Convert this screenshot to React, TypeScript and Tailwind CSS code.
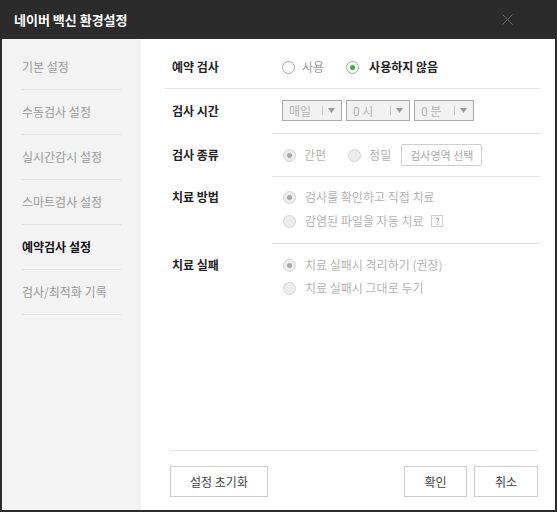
import React, { useState } from 'react';

const FONT = "font-['Noto_Sans_CJK_KR','Noto_Sans',sans-serif]";

const menu = ['기본 설정', '수동검사 설정', '실시간감시 설정', '스마트검사 설정', '예약검사 설정', '검사/최적화 기록'];

function Radio({ checked, disabled }: { checked: boolean; disabled?: boolean }) {
  if (disabled) {
    return (
      <span className="w-[13px] h-[13px] rounded-full border border-[#d4d4d4] bg-[#ececec] flex items-center justify-center shrink-0">
        {checked && <span className="w-[5px] h-[5px] rounded-full bg-[#a8a8a8]" />}
      </span>
    );
  }
  return (
    <span className="w-[13px] h-[13px] rounded-full border border-[#a9a9a9] bg-white flex items-center justify-center shrink-0">
      {checked && <span className="w-[5px] h-[5px] rounded-full bg-[#3aae3a]" />}
    </span>
  );
}

function Select({ label, width }: { label: string; width: string }) {
  return (
    <div className={`${width} h-[21px] border border-[#a8a8a8] bg-[#f2f2f2] flex items-center pl-[6px] pr-[6px] text-[12px] text-[#b4b4b4]`}>
      <span className="flex-1">{label}</span>
      <span className="w-px h-[9px] bg-[#c8c8c8] mr-[5px]" />
      <svg width="7" height="5" viewBox="0 0 7 5">
        <path d="M0 0h7L3.5 5z" fill="#9a9a9a" />
      </svg>
    </div>
  );
}

export default function App() {
  const [active] = useState(4);

  return (
    <div className={`w-[557px] h-[512px] flex flex-col bg-[#2b2b2b] ${FONT}`}>
      {/* title bar */}
      <div className="h-[39px] flex items-center justify-between pl-[14px] pr-[44px] shrink-0">
        <span className="text-[13px] font-bold text-white leading-none">네이버 백신 환경설정</span>
        <svg width="11" height="11" viewBox="0 0 11 11">
          <path d="M0.5 0.5l10 10M10.5 0.5l-10 10" stroke="#6f6f6f" strokeWidth="1" />
        </svg>
      </div>

      <div className="flex-1 flex ml-[2px] mr-[2px] mb-[2px] min-h-0">
        {/* sidebar */}
        <div className="w-[139px] bg-[#f3f3f3] pt-[6px]">
          {menu.map((m, i) => (
            <div key={m} className="ml-[20px] w-[99px] h-[45px] border-b border-[#e2e2e2] flex items-center">
              <span className={`text-[12px] leading-none ${i === active ? 'font-bold text-[#111]' : 'text-[#9a9a9a]'}`}>{m}</span>
            </div>
          ))}
        </div>

        {/* content */}
        <div className="flex-1 bg-white flex flex-col pl-[31px] pr-[15px] text-[12px] leading-none">
          {/* 예약 검사 */}
          <div className="h-[50px] pt-[20px] flex flex-col">
            <div className="flex items-center h-[16px]">
              <span className="w-[110px] font-bold text-[#222]">예약 검사</span>
              <Radio checked={false} />
              <span className="ml-[7px] text-[#999]">사용</span>
              <span className="ml-[22px]"><Radio checked /></span>
              <span className="ml-[10px] font-bold text-[#222]">사용하지 않음</span>
            </div>
            <div className="mt-auto -ml-[7px] h-px bg-[#e4e4e4]" />
          </div>

          {/* 검사 시간 */}
          <div className="h-[45px] flex flex-col pt-[11px]">
            <div className="flex items-center h-[21px]">
              <span className="w-[110px] font-bold text-[#222]">검사 시간</span>
              <div className="flex gap-[4px]">
                <Select label="매일" width="w-[60px]" />
                <Select label="0 시" width="w-[64px]" />
                <Select label="0 분" width="w-[60px]" />
              </div>
            </div>
            <div className="mt-auto ml-[100px] h-px bg-[#e4e4e4]" />
          </div>

          {/* 검사 종류 */}
          <div className="h-[43px] flex flex-col pt-[10px]">
            <div className="flex items-center h-[22px]">
              <span className="w-[111px] font-bold text-[#222]">검사 종류</span>
              <Radio checked disabled />
              <span className="ml-[8px] text-[#b4b4b4]">간편</span>
              <span className="ml-[22px]"><Radio checked={false} disabled /></span>
              <span className="ml-[8px] text-[#b4b4b4]">정밀</span>
              <span className="ml-[10px] h-[22px] px-[8px] border border-[#cfcfcf] rounded-[2px] flex items-center text-[11px] text-[#aaa]">검사영역 선택</span>
            </div>
            <div className="mt-auto ml-[100px] h-px bg-[#e4e4e4]" />
          </div>

          {/* 치료 방법 */}
          <div className="h-[67px] flex flex-col pt-[13px]">
            <div className="flex">
              <span className="w-[111px] font-bold text-[#222] h-[14px] flex items-center">치료 방법</span>
              <div className="flex flex-col gap-[10px]">
                <div className="flex items-center h-[14px]">
                  <Radio checked disabled />
                  <span className="ml-[9px] text-[#b4b4b4]">검사를 확인하고 직접 치료</span>
                </div>
                <div className="flex items-center h-[14px]">
                  <Radio checked={false} disabled />
                  <span className="ml-[9px] text-[#b4b4b4]">감염된 파일을 자동 치료</span>
                  <span className="ml-[8px] w-[12px] h-[12px] border border-[#cfcfcf] flex items-center justify-center text-[9px] text-[#999]">?</span>
                </div>
              </div>
            </div>
            <div className="mt-auto ml-[100px] h-px bg-[#e4e4e4]" />
          </div>

          {/* 치료 실패 */}
          <div className="pt-[14px] flex">
            <span className="w-[111px] font-bold text-[#222] h-[14px] flex items-center">치료 실패</span>
            <div className="flex flex-col gap-[9px]">
              <div className="flex items-center h-[14px]">
                <Radio checked disabled />
                <span className="ml-[9px] text-[#b4b4b4]">치료 실패시 격리하기 (권장)</span>
              </div>
              <div className="flex items-center h-[14px]">
                <Radio checked={false} disabled />
                <span className="ml-[9px] text-[#b4b4b4]">치료 실패시 그대로 두기</span>
              </div>
            </div>
          </div>

          {/* footer */}
          <div className="mt-auto ml-[-2px] mr-[2px] border-t border-[#e4e4e4] pt-[15px] pb-[13px] flex">
            <button className="w-[98px] h-[31px] border border-[#cdcdcd] bg-white text-[12px] text-[#444]">설정 초기화</button>
            <div className="flex-1" />
            <button className="w-[63px] h-[31px] border border-[#cdcdcd] bg-white text-[12px] text-[#444]">확인</button>
            <button className="ml-[7px] w-[64px] h-[31px] border border-[#cdcdcd] bg-white text-[12px] text-[#444]">취소</button>
          </div>
        </div>
      </div>
    </div>
  );
}
